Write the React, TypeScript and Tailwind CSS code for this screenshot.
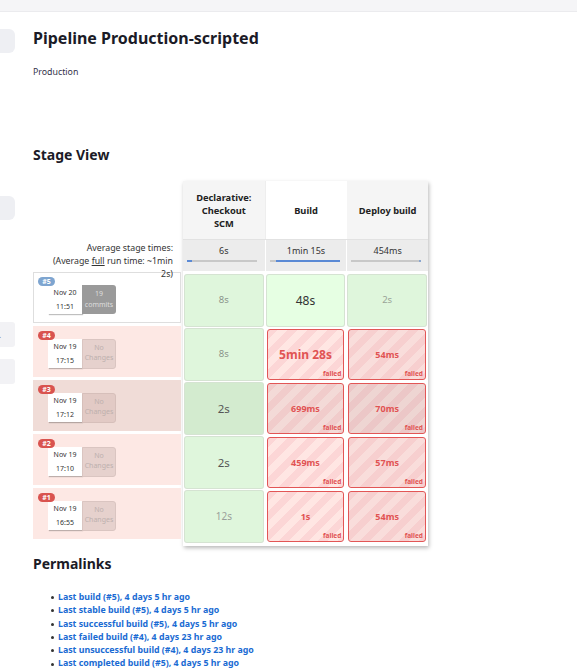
import React from "react";

type Cell = { t: string; fail?: boolean; cls: string; bg: string };
type Row = {
  n: string;
  badge: string;
  date: string;
  time: string;
  commits?: boolean;
  rowBg: string;
  chBg: string;
  cells: Cell[];
};

const S2 =
  "bg-[repeating-linear-gradient(135deg,#fcd6d6_0px,#fcd6d6_7px,#ffe6e3_7px,#ffe6e3_14px)]";
const S3 =
  "bg-[repeating-linear-gradient(135deg,#f7cfcf_0px,#f7cfcf_7px,#f9dddb_7px,#f9dddb_14px)]";
const S2d =
  "bg-[repeating-linear-gradient(135deg,#f1cccb_0px,#f1cccb_7px,#f3dad7_7px,#f3dad7_14px)]";
const S3d =
  "bg-[repeating-linear-gradient(135deg,#ecc7c7_0px,#ecc7c7_7px,#eed5d2_7px,#eed5d2_14px)]";

const rows: Row[] = [
  {
    n: "#5",
    badge: "bg-[#7ea5d0]",
    date: "Nov 20",
    time: "11:51",
    commits: true,
    rowBg: "bg-white shadow-[inset_0_0_0_1px_#dedede]",
    chBg: "",
    cells: [
      { t: "8s", cls: "text-[9.5px] text-[#8a948a]", bg: "bg-[#dff6dc]" },
      { t: "48s", cls: "text-[12px] text-[#333]", bg: "bg-[#e6ffe3]" },
      { t: "2s", cls: "text-[9.5px] text-[#9aa498]", bg: "bg-[#dff6dc]" },
    ],
  },
  {
    n: "#4",
    badge: "bg-[#d9534f]",
    date: "Nov 19",
    time: "17:15",
    rowBg: "bg-[#fde8e4]",
    chBg: "bg-[#e6d1cd] border border-[#dac5c1]",
    cells: [
      { t: "8s", cls: "text-[9.5px] text-[#8a948a]", bg: "bg-[#dff6dc]" },
      { t: "5min 28s", fail: true, cls: "text-[12px]", bg: S2 },
      { t: "54ms", fail: true, cls: "text-[9px]", bg: S3 },
    ],
  },
  {
    n: "#3",
    badge: "bg-[#d9534f]",
    date: "Nov 19",
    time: "17:12",
    rowBg: "bg-[#f0dcd7]",
    chBg: "bg-[#e2cac5] border border-[#d6bfba]",
    cells: [
      { t: "2s", cls: "text-[11.5px] text-[#555]", bg: "bg-[#d3ebcf]" },
      { t: "699ms", fail: true, cls: "text-[9px]", bg: S2d },
      { t: "70ms", fail: true, cls: "text-[9px]", bg: S3d },
    ],
  },
  {
    n: "#2",
    badge: "bg-[#d9534f]",
    date: "Nov 19",
    time: "17:10",
    rowBg: "bg-[#fde8e4]",
    chBg: "bg-[#e6d1cd] border border-[#dac5c1]",
    cells: [
      { t: "2s", cls: "text-[11.5px] text-[#555]", bg: "bg-[#dff6dc]" },
      { t: "459ms", fail: true, cls: "text-[9px]", bg: S2 },
      { t: "57ms", fail: true, cls: "text-[9px]", bg: S3 },
    ],
  },
  {
    n: "#1",
    badge: "bg-[#d9534f]",
    date: "Nov 19",
    time: "16:55",
    rowBg: "bg-[#fde8e4]",
    chBg: "bg-[#e6d1cd] border border-[#dac5c1]",
    cells: [
      { t: "12s", cls: "text-[10px] text-[#9a9f9a]", bg: "bg-[#dff6dc]" },
      { t: "1s", fail: true, cls: "text-[9px]", bg: S2 },
      { t: "54ms", fail: true, cls: "text-[9px]", bg: S3 },
    ],
  },
];

const links = [
  "Last build (#5), 4 days 5 hr ago",
  "Last stable build (#5), 4 days 5 hr ago",
  "Last successful build (#5), 4 days 5 hr ago",
  "Last failed build (#4), 4 days 23 hr ago",
  "Last unsuccessful build (#4), 4 days 23 hr ago",
  "Last completed build (#5), 4 days 5 hr ago",
];

function BuildRow({ r }: { r: Row }) {
  return (
    <div className={`relative h-[51px] ${r.rowBg}`}>
      <span
        className={`absolute left-[5px] top-[5px] z-10 h-[9px] w-[17px] rounded-full ${r.badge} text-center text-[7px] font-bold leading-[9px] text-white`}
      >
        {r.n}
      </span>
      <div className="ml-[15px] pt-[13px] flex">
        <div className="flex h-[29px] w-[34px] flex-col items-center bg-white pt-[1px] text-[7px] leading-[14px] text-[#333] shadow-[1px_1px_1px_rgba(0,0,0,0.25)]">
          <span>{r.date}</span>
          <span>{r.time}</span>
        </div>
        {r.commits ? (
          <div className="flex h-[29px] w-[34px] flex-col items-center justify-center rounded-r-[3px] bg-[#9a9a9a] text-[7px] leading-[10.5px] text-[#dedede]">
            <span>19</span>
            <span>commits</span>
          </div>
        ) : (
          <div
            className={`box-border flex h-[30px] w-[34px] flex-col items-center justify-center rounded-r-[3px] ${r.chBg} pb-[3px] text-[7px] leading-[10px] text-[#bdb0ad]`}
          >
            <span>No</span>
            <span>Changes</span>
          </div>
        )}
      </div>
    </div>
  );
}

function StageCell({ c }: { c: Cell }) {
  if (c.fail) {
    return (
      <div
        className={`relative mx-[2px] flex h-[51px] items-center justify-center rounded-[3px] border-[1.5px] border-[#e25656] ${c.bg}`}
      >
        <span className={`font-bold text-[#e15353] ${c.cls}`}>{c.t}</span>
        <span className="absolute bottom-[1px] right-[2px] text-[6.5px] font-bold leading-[8px] text-[#e15353]">
          failed
        </span>
      </div>
    );
  }
  return (
    <div
      className={`mx-[2px] flex h-[51px] items-center justify-center rounded-[2px] ${c.bg} shadow-[0_0_0_1px_#d5e3d2]`}
    >
      <span className={c.cls}>{c.t}</span>
    </div>
  );
}

function AvgCell({
  t,
  children,
  border,
}: {
  t: string;
  children: React.ReactNode;
  border?: boolean;
}) {
  return (
    <div
      className={`flex h-[31px] flex-col bg-[#ececec] ${border ? "border-l border-white" : ""}`}
    >
      <div className="pt-[4px] text-center text-[9px] leading-[13px] text-[#333]">{t}</div>
      <div className="ml-[4px] mt-[3px] flex h-[2px] w-[70px] bg-[#c8c8c8]">{children}</div>
    </div>
  );
}

export default function App() {
  return (
    <div className="min-h-[670px] w-full overflow-hidden bg-white font-['Noto_Sans',sans-serif] text-[#1b1b27]">
      <div className="h-[12px] border-b border-[#ebebee] bg-[#f5f5f7]" />
      <div className="flex">
        <div className="flex w-[15px] shrink-0 flex-col">
          <div className="mt-[17px] h-[24px] rounded-r-[6px] bg-[#eeeff3]" />
          <div className="mt-[143px] h-[24px] rounded-r-[6px] bg-[#eeeff3]" />
          <div className="mt-[102px] flex h-[25px] items-center rounded-r-[3px] bg-[#f2f2f5] text-[8px] leading-[8px] text-[#777]">
            <span className="-ml-[1px]">.</span>
          </div>
          <div className="mt-[12px] h-[25px] rounded-r-[3px] bg-[#f2f2f5]" />
        </div>

        <div className="ml-[18px] min-w-0 flex-1">
          <h1 className="mt-[15px] text-[16px] font-bold leading-[22px]">
            Pipeline Production-scripted
          </h1>
          <p className="mt-[17px] text-[8.8px] leading-[12px] text-[#33334a]">Production</p>
          <h2 className="mt-[67px] text-[14px] font-bold leading-[20px]">Stage View</h2>

          <div className="mt-[16px] flex items-start">
            <div className="flex w-[148px] shrink-0 flex-col">
              <div className="h-[58px]" />
              <div className="relative z-10 h-[31px] pr-[8px] pt-[3px] text-right text-[8.8px] leading-[13px] text-[#333]">
                Average stage times:
                <br />
                (Average <span className="underline">full</span> run time: ~1min
                <br />
                2s)
              </div>
              <div className="mt-[2px] flex flex-col gap-[3px]">
                {rows.map((r) => (
                  <BuildRow key={r.n} r={r} />
                ))}
              </div>
            </div>

            <div className="ml-[2px] w-[245px] shrink-0 shadow-[1px_2px_4px_rgba(0,0,0,0.28)]">
              <div className="grid h-[58px] grid-cols-3 text-center text-[9.3px] font-bold leading-[13px] text-[#222]">
                <div className="flex items-center justify-center bg-[#f5f5f5]">
                  Declarative:
                  <br />
                  Checkout
                  <br />
                  SCM
                </div>
                <div className="flex items-center justify-center border-l border-[#eeeeee] bg-white">
                  Build
                </div>
                <div className="flex items-center justify-center border-l border-white bg-[#f5f5f5]">
                  Deploy build
                </div>
              </div>
              <div className="grid grid-cols-3 border-t border-[#e2e2e2]">
                <AvgCell t="6s">
                  <div className="h-full w-[5px] bg-[#5b8ad5]" />
                </AvgCell>
                <AvgCell t="1min 15s" border>
                  <div className="h-full w-[6px]" />
                  <div className="h-full flex-1 bg-[#5b8ad5]" />
                </AvgCell>
                <AvgCell t="454ms" border>
                  <div className="h-full flex-1" />
                  <div className="h-full w-[2px] bg-[#8aa6cf]" />
                </AvgCell>
              </div>
              <div className="flex flex-col gap-[3px] pb-[4px] pt-[4px]">
                {rows.map((r) => (
                  <div key={r.n} className="grid grid-cols-3">
                    {r.cells.map((c, i) => (
                      <StageCell key={i} c={c} />
                    ))}
                  </div>
                ))}
              </div>
            </div>
          </div>

          <h2 className="mt-[8px] text-[14px] font-bold leading-[20px]">Permalinks</h2>
          <ul className="mt-[17px] flex flex-col">
            {links.map((l) => (
              <li key={l} className="flex items-center pl-[18px] text-[8.8px] font-bold leading-[13.3px]">
                <span className="mr-[4px] h-[3px] w-[3px] rounded-full bg-[#333]" />
                <span className="text-[#1a6bd3]">{l}</span>
              </li>
            ))}
          </ul>
        </div>
      </div>
    </div>
  );
}
